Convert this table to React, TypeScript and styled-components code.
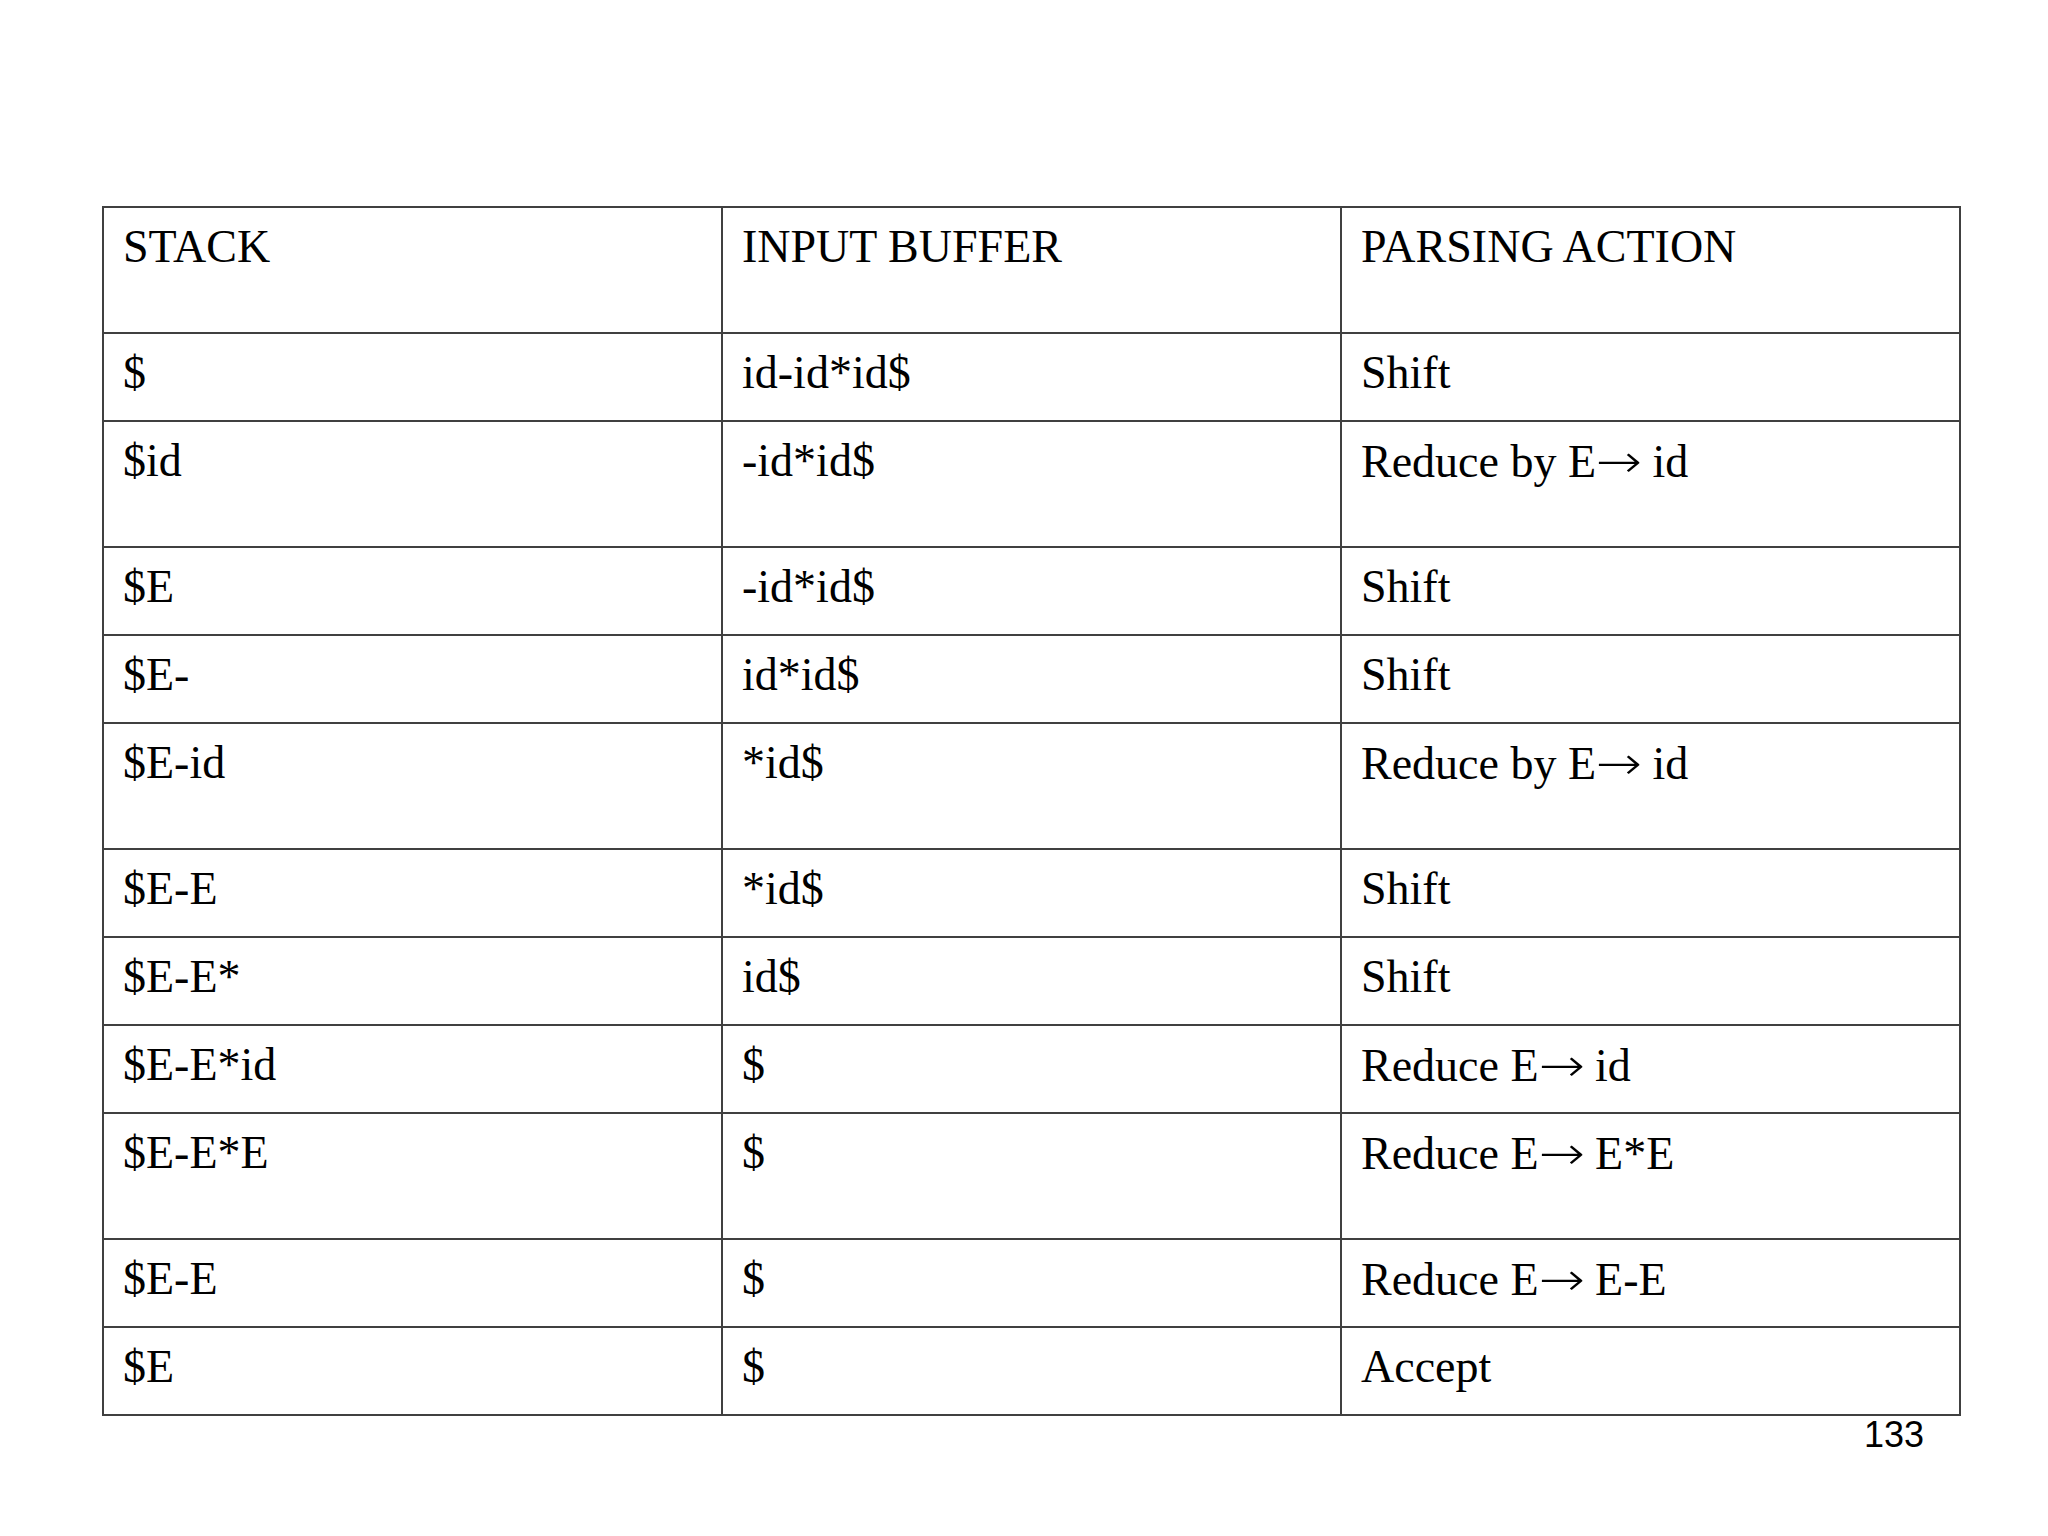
import * as React from 'react';
import styled, { createGlobalStyle } from 'styled-components';

const GlobalStyle = createGlobalStyle`
  html, body {
    margin: 0;
    padding: 0;
    background: #ffffff;
  }
`;

const Slide = styled.div`
  width: 2048px;
  height: 1536px;
  box-sizing: border-box;
  padding: 206px 0 0 102px;
  background: #ffffff;
`;

const Table = styled.div`
  width: 1857px;
  display: grid;
  grid-template-columns: repeat(3, 1fr);
  border-top: 2px solid #404040;
  border-left: 2px solid #404040;
`;

const Cell = styled.div<{ $tall?: boolean }>`
  height: ${(p) => (p.$tall ? 124 : 86)}px;
  box-sizing: content-box;
  border-right: 2px solid #404040;
  border-bottom: 2px solid #404040;
  padding: 0 20px 0 19px;
  display: flex;
  align-items: flex-start;
  font-family: 'Liberation Serif', 'Times New Roman', serif;
  font-size: 46px;
  line-height: normal;
  color: #000000;
  white-space: nowrap;
  & > span {
    display: block;
    margin-top: 12px;
  }
`;

// the arrow in "E→ id": a long thin arrow sitting tight against the E
const Arrow = styled.span`
  display: inline-block;
  width: 45px;
  font-family: 'DejaVu Sans', sans-serif;
  font-weight: 200;
  font-size: 46px;
  transform: scaleX(1.2);
  transform-origin: left center;
`;

const PageNumber = styled.div`
  width: 1857px;
  box-sizing: border-box;
  padding-right: 35px;
  margin-top: -2px;
  text-align: right;
  font-family: 'Liberation Sans', Arial, sans-serif;
  font-size: 36px;
  line-height: normal;
  color: #000000;
`;

const renderText = (text: string) => {
  const parts = text.split('\u2192');
  if (parts.length === 1) return text;
  return (
    <>
      {parts[0]}
      <Arrow>{'\u2192'}</Arrow>
      {parts[1]}
    </>
  );
};

const rows: { cells: string[]; tall?: boolean }[] = [
  { cells: ['STACK', 'INPUT BUFFER', 'PARSING ACTION'], tall: true },
  { cells: ['$', 'id-id*id$', 'Shift'] },
  { cells: ['$id', '-id*id$', 'Reduce by E\u2192 id'], tall: true },
  { cells: ['$E', '-id*id$', 'Shift'] },
  { cells: ['$E-', 'id*id$', 'Shift'] },
  { cells: ['$E-id', '*id$', 'Reduce by E\u2192 id'], tall: true },
  { cells: ['$E-E', '*id$', 'Shift'] },
  { cells: ['$E-E*', 'id$', 'Shift'] },
  { cells: ['$E-E*id', '$', 'Reduce E\u2192 id'] },
  { cells: ['$E-E*E', '$', 'Reduce E\u2192 E*E'], tall: true },
  { cells: ['$E-E', '$', 'Reduce E\u2192 E-E'] },
  { cells: ['$E', '$', 'Accept'] },
];

const App = () => (
  <>
    <GlobalStyle />
    <Slide>
      <Table>
        {rows.map((row, i) =>
          row.cells.map((text, j) => (
            <Cell key={`${i}-${j}`} $tall={row.tall}>
              <span>{renderText(text)}</span>
            </Cell>
          ))
        )}
      </Table>
      <PageNumber>133</PageNumber>
    </Slide>
  </>
);

export default App;
